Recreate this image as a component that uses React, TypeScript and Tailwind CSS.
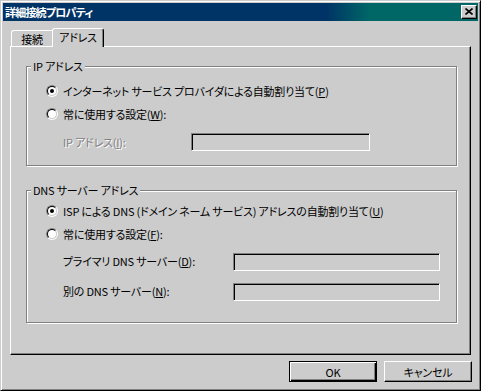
import React from 'react';

const Radio: React.FC<{ checked?: boolean }> = ({ checked }) => (
  <span className="block w-[12px] h-[12px] shrink-0 rounded-full border border-t-[#808080] border-l-[#808080] border-b-white border-r-white">
    <span className="flex items-center justify-center w-full h-full rounded-full border border-t-black border-l-black border-b-[#cccccc] border-r-[#cccccc] bg-white">
      {checked && <span className="block w-[4px] h-[4px] rounded-full bg-black" />}
    </span>
  </span>
);

const RadioRow: React.FC<{ checked?: boolean; className: string; children: React.ReactNode }> = ({ checked, className, children }) => (
  <div className={className}>
    <Radio checked={checked} />
    <span className="whitespace-nowrap">{children}</span>
  </div>
);

const Button: React.FC<{ isDefault?: boolean; children: React.ReactNode }> = ({ isDefault, children }) =>
  isDefault ? (
    <button className="w-[88px] h-[21px] flex items-center justify-center border border-black bg-[#cccccc] shadow-[inset_1px_1px_0_#fff,inset_-1px_-1px_0_#000,inset_-2px_-2px_0_#808080]">
      {children}
    </button>
  ) : (
    <button className="w-[88px] h-[21px] flex items-center justify-center border border-t-white border-l-white border-b-black border-r-black bg-[#cccccc] shadow-[inset_-1px_-1px_0_#808080]">
      {children}
    </button>
  );

export default function App() {
  return (
    <div className="w-[481px] h-[391px] bg-[#cccccc] text-black text-[11px] leading-[14px] tracking-[-0.2px] font-['Noto_Sans_CJK_JP','Noto_Sans',sans-serif] [font-feature-settings:'palt'] border border-t-[#cccccc] border-l-[#cccccc] border-b-black border-r-black shadow-[inset_1px_1px_0_#fff,inset_-1px_-1px_0_#808080] p-[2px] overflow-hidden select-none">
      {/* title bar */}
      <div className="h-[18px] flex items-center justify-between bg-[linear-gradient(to_right,#003366_68%,#006666_77%)]">
        <span className="pl-[2px] font-bold text-white tracking-[-0.8px]">詳細接続プロパティ</span>
        <div className="mr-[1px] w-[16px] h-[14px] flex items-center justify-center bg-[#cccccc] border border-t-white border-l-white border-b-black border-r-black shadow-[inset_-1px_-1px_0_#808080]">
          <svg width="8" height="7" viewBox="0 0 8 7" className="mb-[1px]">
            <path d="M0.5 0.5 L7.5 6.5 M7.5 0.5 L0.5 6.5" stroke="#000" strokeWidth="1.6" fill="none" />
          </svg>
        </div>
      </div>

      {/* body */}
      <div className="px-[7px] pt-[7px]">
        <div className="relative z-10 flex items-end h-[18px] pl-[1px]">
          <div className="w-[41px] h-[16px] flex items-center justify-center border-l border-t border-white rounded-tl-[3px]">
            接続
          </div>
          <div className="self-start w-[52px] h-[19px] flex items-center justify-center pb-[2px] bg-[#cccccc] border-l border-t border-l-white border-t-white border-r border-r-black rounded-t-[3px] shadow-[inset_-1px_0_0_#808080]">
            アドレス
          </div>
        </div>

        <div className="w-[461px] h-[309px] border border-t-white border-l-white border-b-black border-r-black shadow-[inset_-1px_-1px_0_#808080]">
          {/* IP group */}
          <div className="relative ml-[15px] mt-[19px] w-[431px] h-[100px] border border-[#808080] shadow-[1px_1px_0_#fff,inset_1px_1px_0_#fff] pl-[19px] pt-[15px]">
            <span className="absolute left-[4px] -top-[8px] px-[2px] bg-[#cccccc] whitespace-nowrap">IP アドレス</span>
            <RadioRow checked className="flex items-center gap-[5px] h-[18px]">
              インターネット サービス プロバイダによる自動割り当て(<u>P</u>)
            </RadioRow>
            <RadioRow className="flex items-center gap-[5px] h-[18px] mt-[5px]">
              常に使用する設定(<u>W</u>):
            </RadioRow>
            <div className="flex items-center h-[18px] mt-[10px] pl-[17px]">
              <span className="w-[128px] whitespace-nowrap text-[#808080] [text-shadow:1px_1px_0_#fff]">
                IP アドレス(<u>I</u>):
              </span>
              <div className="w-[179px] h-[18px] border border-t-[#808080] border-l-[#808080] border-b-white border-r-white shadow-[inset_1px_1px_0_#000]" />
            </div>
          </div>

          {/* DNS group */}
          <div className="relative ml-[15px] mt-[24px] w-[431px] h-[133px] border border-[#808080] shadow-[1px_1px_0_#fff,inset_1px_1px_0_#fff] pl-[19px] pt-[11px]">
            <span className="absolute left-[4px] -top-[8px] px-[2px] bg-[#cccccc] whitespace-nowrap">DNS サーバー アドレス</span>
            <RadioRow checked className="flex items-center gap-[5px] h-[18px]">
              ISP による DNS (ドメイン ネーム サービス) アドレスの自動割り当て(<u>U</u>)
            </RadioRow>
            <RadioRow className="flex items-center gap-[5px] h-[18px] mt-[5px]">
              常に使用する設定(<u>F</u>):
            </RadioRow>
            <div className="flex items-center h-[18px] mt-[10px] pl-[17px]">
              <span className="w-[170px] whitespace-nowrap pb-[3px]">
                プライマリ DNS サーバー(<u>D</u>):
              </span>
              <div className="w-[207px] h-[18px] border border-t-[#808080] border-l-[#808080] border-b-white border-r-white shadow-[inset_1px_1px_0_#000]" />
            </div>
            <div className="flex items-center h-[18px] mt-[12px] pl-[17px]">
              <span className="w-[170px] whitespace-nowrap pb-[3px]">
                別の DNS サーバー(<u>N</u>):
              </span>
              <div className="w-[207px] h-[18px] border border-t-[#808080] border-l-[#808080] border-b-white border-r-white shadow-[inset_1px_1px_0_#000]" />
            </div>
          </div>
        </div>

        <div className="flex justify-end gap-[7px] mt-[6px] -mr-[1px]">
          <Button isDefault>OK</Button>
          <Button>キャンセル</Button>
        </div>
      </div>
    </div>
  );
}
